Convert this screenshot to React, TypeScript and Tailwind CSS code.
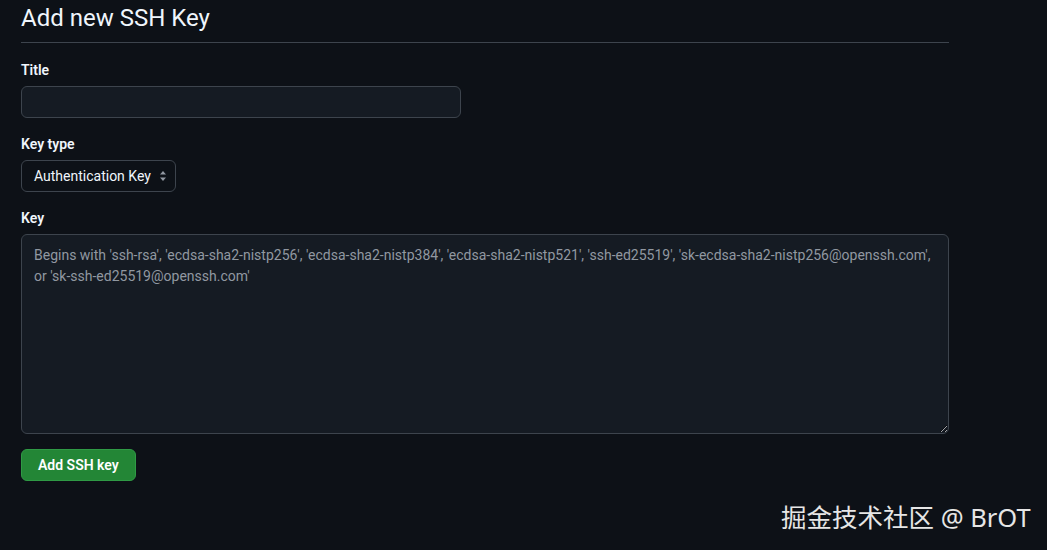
import React from "react";

export default function App() {
  return (
    <div
      className="relative w-[1047px] h-[550px] overflow-hidden bg-[#0d1117] text-[#f0f6fc]"
      style={{ fontFamily: 'Roboto, "Noto Sans", sans-serif' }}
    >
      <div className="w-[928px] ml-[21px]">
        <h1 className="text-[24px] leading-[36px] font-normal pt-0 pb-[6px] border-b border-[#3d444d]">
          Add new SSH Key
        </h1>

        <form className="pt-[17px]">
          <div className="mb-[16px]">
            <label className="block text-[14px] leading-[20px] font-semibold mb-[6px]">Title</label>
            <input
              type="text"
              className="block w-[440px] h-[32px] rounded-[6px] bg-[#151b23] border border-[#3d444d] px-[12px] text-[14px] outline-none"
            />
          </div>

          <div className="mb-[16px]">
            <label className="block text-[14px] leading-[20px] font-semibold mb-[6px]">Key type</label>
            <div className="flex items-center w-[155px] h-[32px] rounded-[6px] bg-[#0d1117] border border-[#3d444d] pl-[12px] pr-[8px] text-[14px]">
              <span className="flex-1 whitespace-nowrap">Authentication Key</span>
              <svg width="8" height="12" viewBox="0 0 8 12" className="text-[#9198a1] shrink-0">
                <path d="M4 1 L7 4.5 H1 Z" fill="currentColor" />
                <path d="M4 11 L7 7.5 H1 Z" fill="currentColor" />
              </svg>
            </div>
          </div>

          <div className="mb-[15px]">
            <label className="block text-[14px] leading-[20px] font-semibold mb-[6px]">Key</label>
            <textarea
              placeholder="Begins with 'ssh-rsa', 'ecdsa-sha2-nistp256', 'ecdsa-sha2-nistp384', 'ecdsa-sha2-nistp521', 'ssh-ed25519', 'sk-ecdsa-sha2-nistp256@openssh.com', or 'sk-ssh-ed25519@openssh.com'"
              className="block w-[928px] h-[200px] rounded-[6px] bg-[#151b23] border border-[#3d444d] px-[12px] py-[10px] text-[14px] leading-[21px] placeholder:text-[#9198a1] outline-none"
            />
          </div>

          <button
            type="button"
            className="h-[32px] px-[16px] rounded-[6px] bg-[#238636] border border-[#2f9a45] text-white text-[14px] font-semibold"
          >
            Add SSH key
          </button>
        </form>
      </div>

      <div
        className="absolute left-[781px] top-[499px] text-[25.5px] leading-[36px] text-[#e6e6e6]"
        style={{ fontFamily: '"Noto Sans", "Noto Sans CJK SC", sans-serif' }}
      >
        掘金技术社区 @ BrOT
      </div>
    </div>
  );
}
